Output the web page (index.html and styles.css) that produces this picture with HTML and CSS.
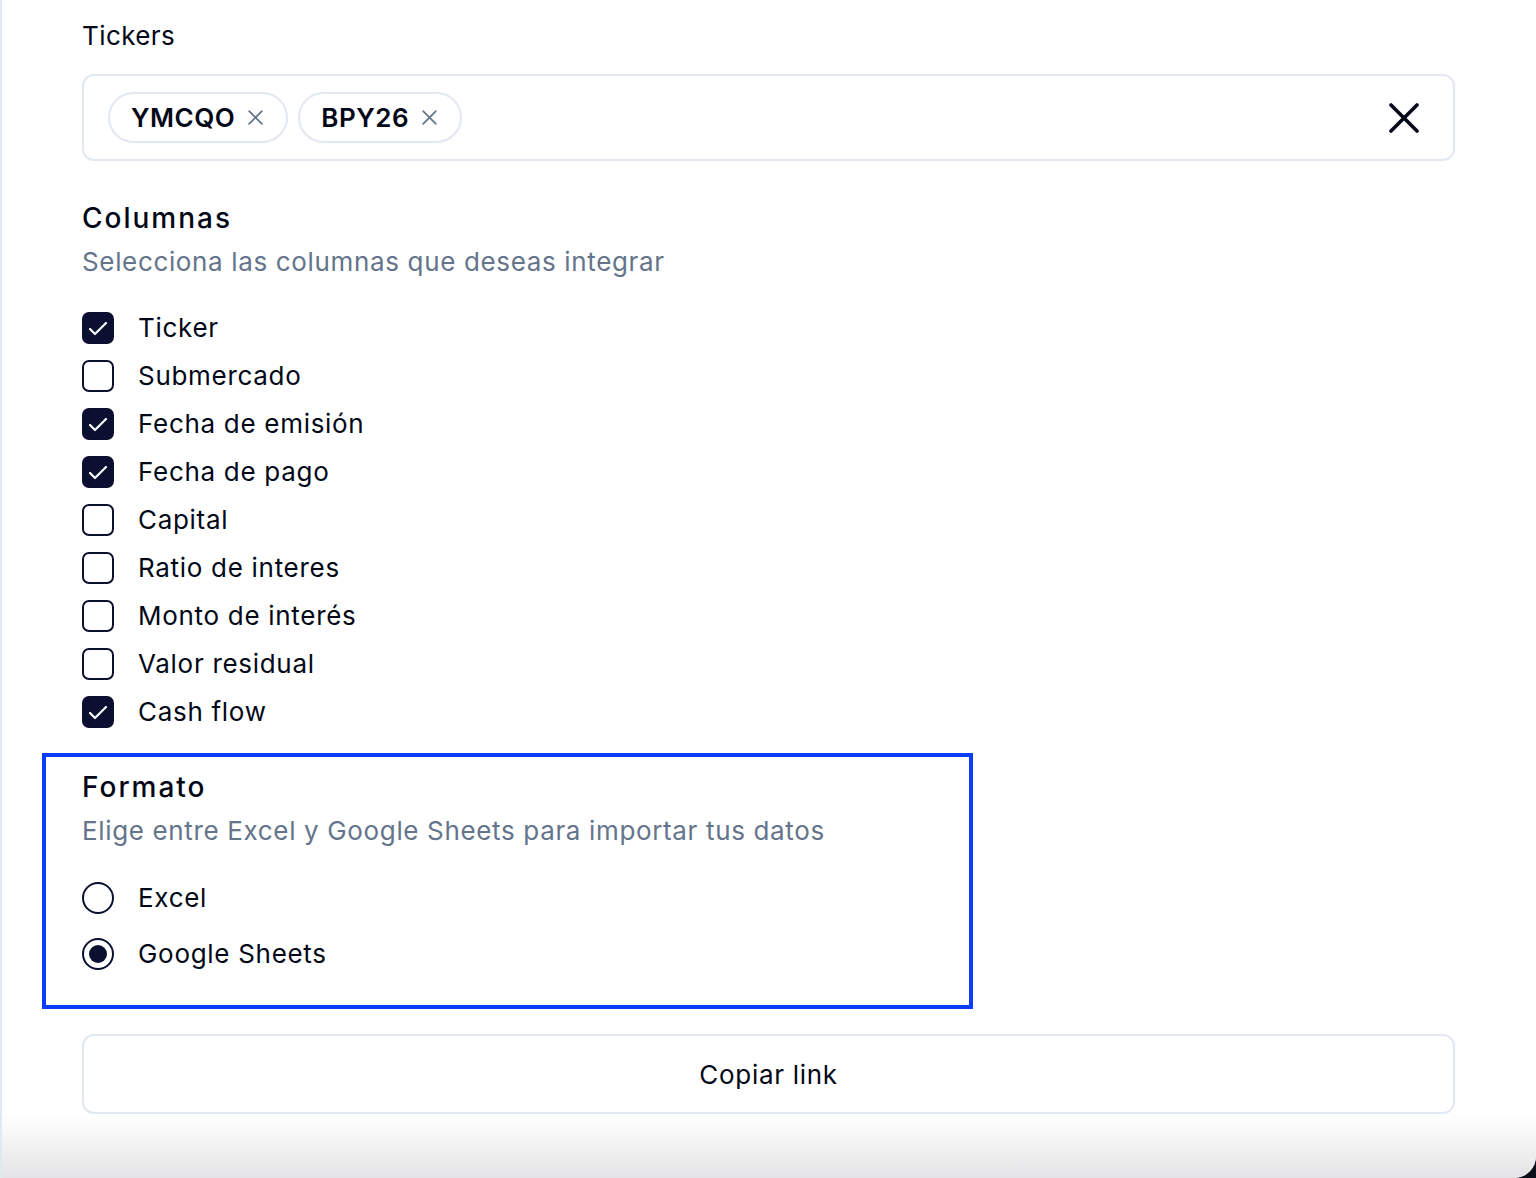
FILE: index.html
```html
<!DOCTYPE html>
<html lang="es">
<head>
    <meta charset="UTF-8">
    <meta name="viewport" content="width=device-width, initial-scale=1.0">
    <title>Exportar cash flow</title>
    <link rel="stylesheet" href="styles.css">
</head>
<body>

    <div class="panel">

        <!-- Tickers -->
        <label class="field-label" for="tickers">Tickers</label>
        <div class="ticker-box" id="tickers">
            <div class="chips">
                <span class="chip">YMCQO
                    <svg class="chip-x" viewBox="0 0 16 16"><path d="M2 2l12 12M14 2L2 14"/></svg>
                </span>
                <span class="chip">BPY26
                    <svg class="chip-x" viewBox="0 0 16 16"><path d="M2 2l12 12M14 2L2 14"/></svg>
                </span>
            </div>
            <button class="clear-btn" aria-label="Limpiar">
                <svg viewBox="0 0 30 30"><path d="M2 2l26 26M28 2L2 28"/></svg>
            </button>
        </div>

        <!-- Columnas -->
        <h2 class="section-title">Columnas</h2>
        <p class="section-sub">Selecciona las columnas que deseas integrar</p>
        <ul class="check-list">
            <li class="check-row"><span class="box checked"><svg viewBox="0 0 24 24"><path d="M20 6 9 17l-5-5"/></svg></span>Ticker</li>
            <li class="check-row"><span class="box"></span>Submercado</li>
            <li class="check-row"><span class="box checked"><svg viewBox="0 0 24 24"><path d="M20 6 9 17l-5-5"/></svg></span>Fecha de emisión</li>
            <li class="check-row"><span class="box checked"><svg viewBox="0 0 24 24"><path d="M20 6 9 17l-5-5"/></svg></span>Fecha de pago</li>
            <li class="check-row"><span class="box"></span>Capital</li>
            <li class="check-row"><span class="box"></span>Ratio de interes</li>
            <li class="check-row"><span class="box"></span>Monto de interés</li>
            <li class="check-row"><span class="box"></span>Valor residual</li>
            <li class="check-row"><span class="box checked"><svg viewBox="0 0 24 24"><path d="M20 6 9 17l-5-5"/></svg></span>Cash flow</li>
        </ul>

        <!-- Formato (highlighted) -->
        <section class="format-section">
            <h2 class="section-title">Formato</h2>
            <p class="section-sub">Elige entre Excel y Google Sheets para importar tus datos</p>
            <ul class="radio-list">
                <li class="radio-row"><span class="radio"></span>Excel</li>
                <li class="radio-row"><span class="radio selected"></span>Google Sheets</li>
            </ul>
        </section>

        <button class="copy-btn">Copiar link</button>

        <div class="fade"></div>
    </div>

</body>
</html>
```

FILE: styles.css
```css
/* Page */
body {
    margin: 0;
    background: #0b0f1a;
    font-family: "Inter", "Noto Sans", sans-serif;
    color: #020817;
}

.panel {
    display: flex;
    flex-direction: column;
    min-height: 1178px;
    box-sizing: border-box;
    padding: 20px 81px 0 80px;
    background: #fff;
    border-left: 2px solid #e2e8f0;
    border-bottom-right-radius: 22px;
    overflow: hidden;
}

/* Labels and headings */
.field-label {
    font-size: 26px;
    line-height: 32px;
    letter-spacing: 0.4px;
}

.section-title {
    margin: 41px 0 0;
    font-size: 28px;
    line-height: 32px;
    font-weight: 500;
    letter-spacing: 2px;
}

.section-sub {
    margin: 12px 0 0;
    font-size: 26px;
    line-height: 32px;
    color: #64748b;
    letter-spacing: 0.65px;
}

/* Tickers input */
.ticker-box {
    display: flex;
    align-items: center;
    justify-content: space-between;
    margin-top: 22px;
    padding: 16px 34px 16px 24px;
    border: 2px solid #e2e8f0;
    border-radius: 12px;
}

.chips {
    display: flex;
    gap: 10px;
}

.chip {
    display: inline-flex;
    align-items: center;
    gap: 12px;
    height: 51px;
    box-sizing: border-box;
    padding: 0 22px 0 21px;
    border: 2px solid #e2e8f0;
    border-radius: 999px;
    font-size: 26px;
    font-weight: 600;
    letter-spacing: 0.5px;
}

.chip-x {
    width: 17px;
    height: 17px;
    fill: none;
    stroke: #64748b;
    stroke-width: 1.6;
    stroke-linecap: round;
}

.clear-btn {
    display: flex;
    padding: 0;
    border: 0;
    background: none;
    cursor: pointer;
}

.clear-btn svg {
    width: 30px;
    height: 30px;
    fill: none;
    stroke: #020817;
    stroke-width: 3.6;
    stroke-linecap: round;
}

/* Checkboxes */
.check-list,
.radio-list {
    list-style: none;
    margin: 34px 0 0;
    padding: 0;
    display: flex;
    flex-direction: column;
    gap: 16px;
}

.check-row,
.radio-row {
    display: flex;
    align-items: center;
    gap: 24px;
    font-size: 26px;
    line-height: 32px;
    letter-spacing: 0.7px;
}

.box {
    display: flex;
    align-items: center;
    justify-content: center;
    width: 32px;
    height: 32px;
    box-sizing: border-box;
    border: 2px solid #0b1030;
    border-radius: 7px;
}

.box.checked {
    background: #0b1030;
}

.box svg {
    width: 24px;
    height: 24px;
    margin-top: 2px;
    fill: none;
    stroke: #fff;
    stroke-width: 2.2;
    stroke-linecap: round;
    stroke-linejoin: round;
}

/* Formato block, outlined in blue */
.format-section {
    width: 931px;
    box-sizing: border-box;
    margin: 25px 0 0 -40px;
    padding: 14px 0 35px 36px;
    border: 4px solid #0a3cff;
}

.format-section .section-title {
    margin-top: 0;
}

.radio-list {
    margin-top: 35px;
    gap: 24px;
}

.radio {
    display: flex;
    align-items: center;
    justify-content: center;
    width: 32px;
    height: 32px;
    box-sizing: border-box;
    border: 2px solid #0b1030;
    border-radius: 50%;
}

.radio.selected::after {
    content: "";
    width: 18px;
    height: 18px;
    border-radius: 50%;
    background: #0b1030;
}

/* Copy button */
.copy-btn {
    margin-top: 25px;
    height: 80px;
    border: 2px solid #e2e8f0;
    border-radius: 12px;
    background: #fff;
    font-family: inherit;
    font-size: 26px;
    color: #020817;
    letter-spacing: 0.7px;
    cursor: pointer;
}

/* grey fade at the bottom edge */
.fade {
    flex: 1;
    margin: 0 -81px 0 -80px;
    background: linear-gradient(to bottom, #fff 0%, #f4f4f5 40%, #e4e4e6 100%);
}
```
